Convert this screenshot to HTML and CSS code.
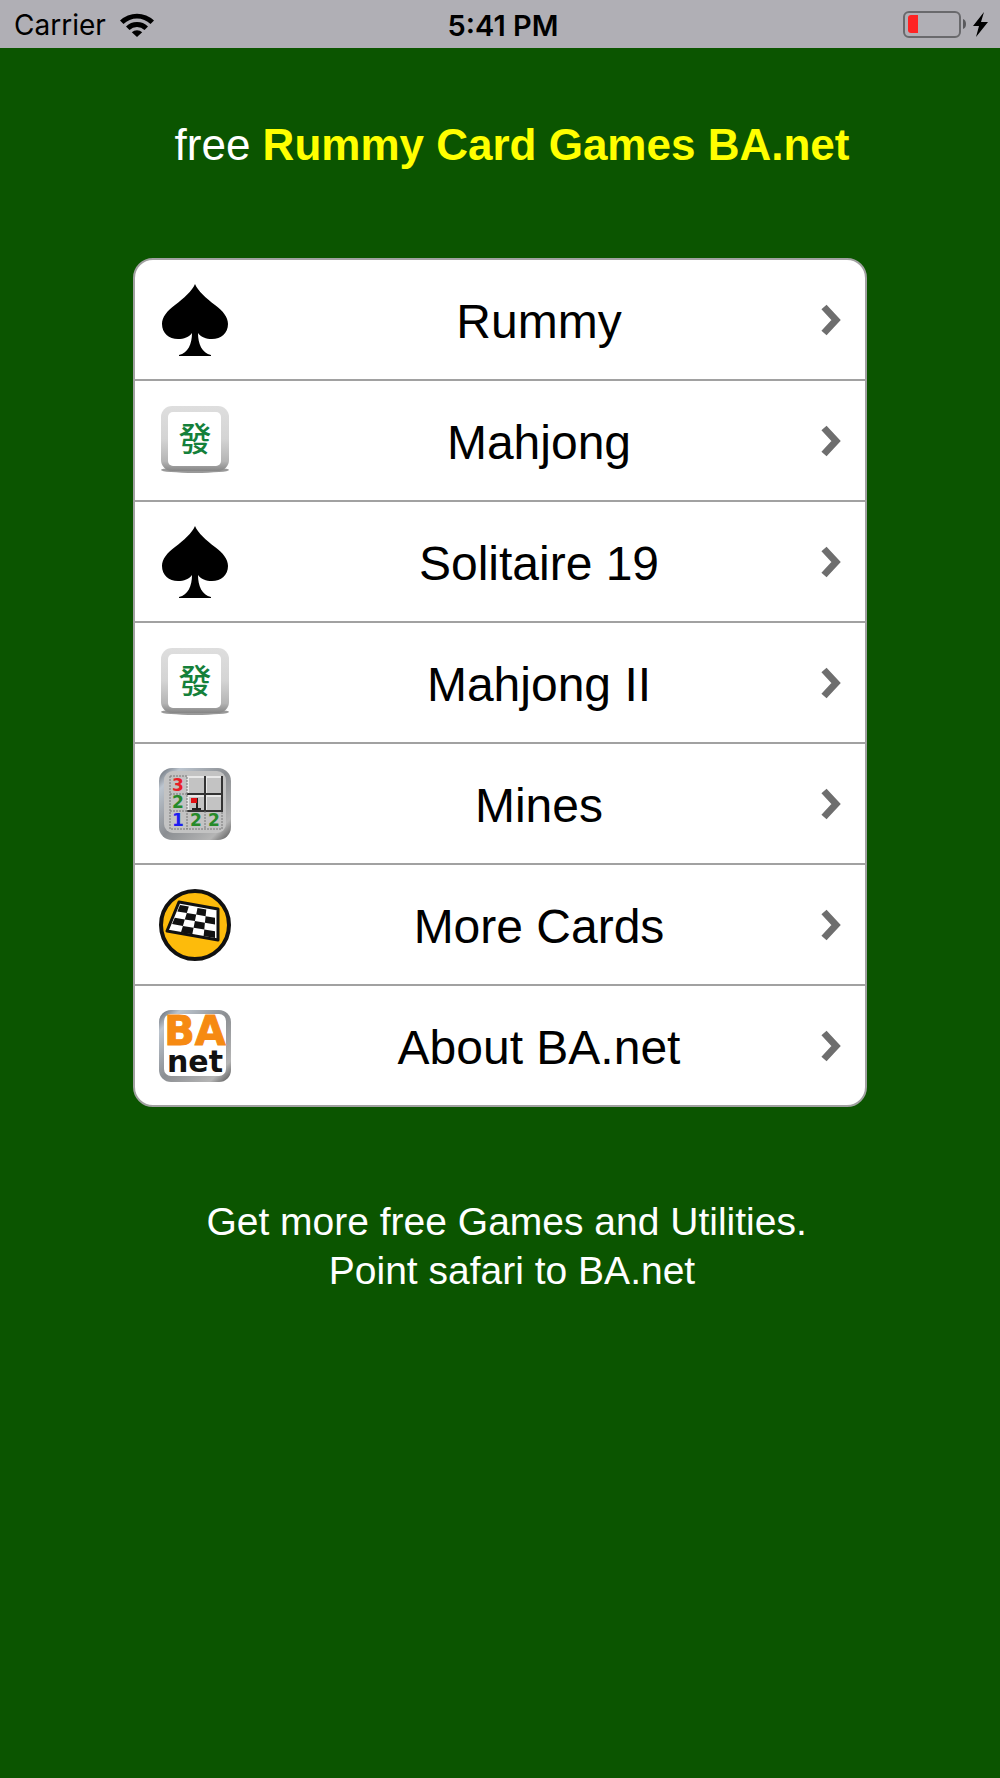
FILE: index.html
```html
<!DOCTYPE html>
<html lang="en">
<head>
    <meta charset="UTF-8">
    <meta name="viewport" content="width=device-width, initial-scale=1.0">
    <title>Rummy Card Games BA.net</title>
    <link rel="stylesheet" href="styles.css">
</head>
<body>
    <!-- shared icons -->
    <svg class="defs" width="0" height="0" aria-hidden="true">
        <defs>
            <linearGradient id="tileEdge" x1="0" y1="0" x2="0" y2="1">
                <stop offset="0" stop-color="#dedede"/>
                <stop offset="0.5" stop-color="#d4d4d4"/>
                <stop offset="0.85" stop-color="#b5b5b5"/>
                <stop offset="1" stop-color="#858585"/>
            </linearGradient>
            <linearGradient id="metal" x1="0" y1="0" x2="1" y2="1">
                <stop offset="0" stop-color="#5c6168"/>
                <stop offset="0.15" stop-color="#bcc5cf"/>
                <stop offset="0.5" stop-color="#8b8e92"/>
                <stop offset="0.85" stop-color="#b5b5b5"/>
                <stop offset="1" stop-color="#505050"/>
            </linearGradient>
            <symbol id="spade" viewBox="0 0 72 72">
                <path d="M36 0C39 7 47 14 56 21C64 27 69 33 69 40C69 49 62 55 53 55C47 55 42 53 39 49C39 60 43 69 52 71V72H20V71C29 69 33 60 33 49C30 53 25 55 19 55C10 55 3 49 3 40C3 33 8 27 16 21C25 14 33 7 36 0Z"/>
            </symbol>
            <symbol id="tile" viewBox="0 0 72 72">
                <ellipse cx="36" cy="65" rx="34" ry="3" fill="#999"/>
                <rect x="2" y="1" width="68" height="65" rx="11" fill="url(#tileEdge)"/>
                <rect x="9" y="7" width="53" height="54" rx="5" fill="#fff"/>
                <text x="36" y="46" class="tile-glyph">發</text>
            </symbol>
            <symbol id="chevron" viewBox="0 0 20 32">
                <path d="M3 3L15 16L3 29" fill="none" stroke="#6e6e6e" stroke-width="7"/>
            </symbol>
        </defs>
    </svg>

    <header class="status-bar">
        <div class="carrier">
            <span>Carrier</span>
            <svg class="wifi" viewBox="0 0 34 24" aria-hidden="true">
                <path d="M0 7.500A24.500 24.500 0 0 1 34 7.500L30.500 11A19.500 19.500 0 0 0 3.500 11Z"/>
                <path d="M6 13.500A16 16 0 0 1 28 13.500L24.500 17A11 11 0 0 0 9.500 17Z"/>
                <path d="M11.800 19.300A7.600 7.600 0 0 1 22.200 19.300L17 24Z"/>
            </svg>
        </div>
        <div class="time">5:41 PM</div>
        <svg class="battery" viewBox="0 0 90 28" role="img" aria-label="Battery charging">
            <rect x="2" y="2" width="56" height="25" rx="5" fill="none" stroke="#69696c" stroke-width="2"/>
            <path d="M6 8Q6 5 9 5H16V23H9Q6 23 6 20Z" fill="#ff2323"/>
            <path d="M61 9Q64 10 64 14Q64 18 61 19Z" fill="#59595c"/>
            <path d="M82 2L71 16H77L74 27L86 12H79Z"/>
        </svg>
    </header>

    <main class="page">
        <h1 class="title">free <b>Rummy Card Games BA.net</b></h1>

        <nav class="menu">
            <a class="menu-item" href="#rummy">
                <svg class="icon"><use href="#spade"/></svg>
                <span class="label">Rummy</span>
                <svg class="arrow"><use href="#chevron"/></svg>
            </a>
            <a class="menu-item" href="#mahjong">
                <svg class="icon"><use href="#tile"/></svg>
                <span class="label">Mahjong</span>
                <svg class="arrow"><use href="#chevron"/></svg>
            </a>
            <a class="menu-item" href="#solitaire">
                <svg class="icon"><use href="#spade"/></svg>
                <span class="label">Solitaire 19</span>
                <svg class="arrow"><use href="#chevron"/></svg>
            </a>
            <a class="menu-item" href="#mahjong2">
                <svg class="icon"><use href="#tile"/></svg>
                <span class="label">Mahjong II</span>
                <svg class="arrow"><use href="#chevron"/></svg>
            </a>
            <a class="menu-item" href="#mines">
                <svg class="icon" viewBox="0 0 72 72">
                    <rect width="72" height="72" rx="13" fill="url(#metal)"/>
                    <rect x="5" y="3" width="62" height="62" rx="9" fill="#c3c3c3"/>
                    <!-- raised cells -->
                    <path d="M29 26V9H45M47 26V9H62M47 42V28H62M29 43V28H45" fill="none" stroke="#e8e8e8" stroke-width="2"/>
                    <path d="M46 8V43M63 8V43M28 26H64M28 43H64" fill="none" stroke="#333" stroke-width="2"/>
                    <path d="M11 8V61H63V43M11 8H28V61M11 26H28M11 43H28M46 43V61" fill="none" stroke="#777" stroke-dasharray="2 1"/>
                    <g class="mine-digits">
                        <text x="19" y="23" fill="#e81e28">3</text>
                        <text x="19" y="40" fill="#268a2a">2</text>
                        <text x="19" y="58" fill="#1c1cf0">1</text>
                        <text x="37" y="58" fill="#268a2a">2</text>
                        <text x="55" y="58" fill="#268a2a">2</text>
                    </g>
                    <path d="M38 30V41M33 41H42" stroke="#222" stroke-width="2"/>
                    <rect x="32" y="30" width="6" height="5" fill="#e00f14"/>
                </svg>
                <span class="label">Mines</span>
                <svg class="arrow"><use href="#chevron"/></svg>
            </a>
            <a class="menu-item" href="#cards">
                <svg class="icon" viewBox="0 0 72 72">
                    <circle cx="36" cy="36" r="34" fill="#fdbb0b" stroke="#111" stroke-width="4"/>
                    <path d="M20 13L59 20V51L8 42Z" fill="#fff" stroke="#111" stroke-width="3" stroke-linejoin="round"/>
                    <path d="M21 16L29.800 17.500L27.800 24L18.400 22.400Z
                             M38.500 19L47.300 20.500L46.600 27.200L37.200 25.600Z
                             M27.800 24L37.200 25.600L35.900 32.100L25.800 30.500Z
                             M46.600 27.200L56 28.800V35.500L45.900 33.800Z
                             M15.800 28.800L25.800 30.500L23.900 36.900L13.100 35.100Z
                             M35.900 32.100L45.900 33.800L45.300 40.500L34.600 38.700Z
                             M23.900 36.900L34.600 38.700L33.300 45.300L21.900 43.400Z
                             M45.300 40.500L56 42.300V49L44.600 47.100Z" fill="#111"/>
                </svg>
                <span class="label">More Cards</span>
                <svg class="arrow"><use href="#chevron"/></svg>
            </a>
            <a class="menu-item" href="#about">
                <svg class="icon" viewBox="0 0 72 72">
                    <rect width="72" height="72" rx="12" fill="url(#metal)"/>
                    <rect x="5" y="4" width="62" height="62" rx="7" fill="#fff"/>
                    <text x="36" y="35" class="logo-ba">BA</text>
                    <text x="36" y="62" class="logo-net">net</text>
                </svg>
                <span class="label">About BA.net</span>
                <svg class="arrow"><use href="#chevron"/></svg>
            </a>
        </nav>

        <p class="note">Get more free Games and Utilities.&nbsp;<br>Point safari to BA.net</p>
    </main>
</body>
</html>
```
FILE: styles.css
```css
body {
    margin: 0;
    background-color: #0b5500;
    color: #fff;
    font-family: "Liberation Sans", Arial, sans-serif;
}
.defs {
    position: absolute;
}
.status-bar {
    display: grid;
    grid-template-columns: 1fr auto 1fr;
    align-items: center;
    height: 48px;
    padding: 0 8px 0 14px;
    background-color: #b0afb5;
    color: #000;
    font-family: Inter, "Liberation Sans", sans-serif;
    font-size: 28px;
}
.carrier {
    display: flex;
    align-items: center;
    gap: 14px;
    padding-top: 2px;
}
.wifi {
    width: 34px;
    height: 24px;
}
.time {
    padding-top: 2px;
    font-size: 29px;
    font-weight: 600;
}
.battery {
    justify-self: end;
    width: 90px;
    height: 28px;
}
.page {
    padding: 72px 132px;
}
.title {
    margin: 0 0 88px;
    padding-left: 24px;
    font-size: 44px;
    font-weight: normal;
    line-height: 50px;
    text-align: center;
    white-space: nowrap;
}
.title b {
    color: #ff0;
}
.menu {
    margin: 0 1px;
    border: 2px solid #a1a1a1;
    border-radius: 20px;
    overflow: hidden;
    background-color: #fff;
}
.menu-item {
    display: flex;
    align-items: center;
    height: 119px;
    padding: 0 24px;
    color: #000;
    text-decoration: none;
}
.menu-item + .menu-item {
    border-top: 2px solid #a1a1a1;
}
.icon {
    flex: none;
    width: 72px;
    height: 72px;
    overflow: visible;
}
.label {
    flex: 1;
    padding: 4px 0 0 26px;
    font-size: 48px;
    line-height: 56px;
    text-align: center;
}
.arrow {
    flex: none;
    width: 20px;
    height: 32px;
}
.note {
    margin: 90px 0 0;
    padding-left: 24px;
    font-size: 39px;
    line-height: 49px;
    text-align: center;
}
.tile-glyph {
    font: 500 33px "Noto Sans CJK TC", sans-serif;
    fill: #14803a;
    text-anchor: middle;
}
.mine-digits {
    font: bold 17px "DejaVu Sans", sans-serif;
    text-anchor: middle;
}
.logo-ba {
    font: bold 40px "DejaVu Sans", sans-serif;
    fill: #f68a12;
    stroke: #f68a12;
    text-anchor: middle;
}
.logo-net {
    font: bold 30px "DejaVu Sans", sans-serif;
    fill: #111;
    text-anchor: middle;
}
```
